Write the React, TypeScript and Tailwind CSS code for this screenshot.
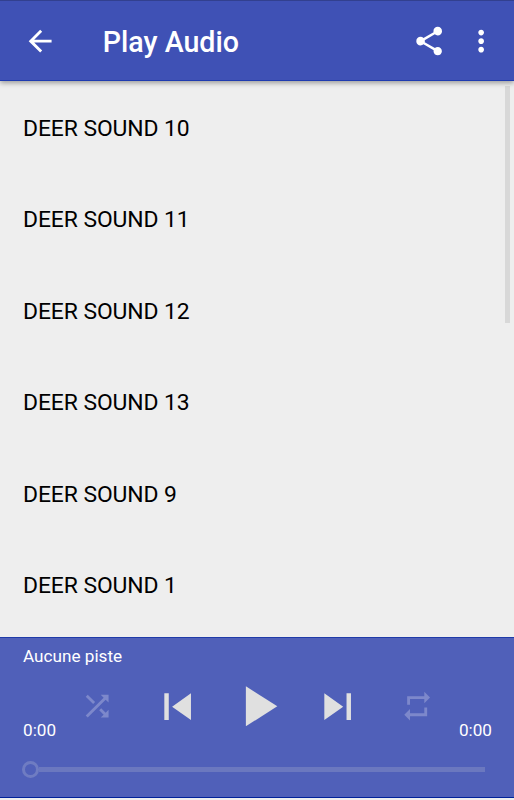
import React from "react";

const tracks = [
  { id: 10, name: "DEER SOUND 10" },
  { id: 11, name: "DEER SOUND 11" },
  { id: 12, name: "DEER SOUND 12" },
  { id: 13, name: "DEER SOUND 13" },
  { id: 9, name: "DEER SOUND 9" },
  { id: 1, name: "DEER SOUND 1" },
];

const icons = {
  back: "M20 11H7.83l5.59-5.59L12 4l-8 8 8 8 1.41-1.41L7.83 13H20v-2z",
  share:
    "M18 16.08c-.76 0-1.44.3-1.96.77L8.91 12.7c.05-.23.09-.46.09-.7s-.04-.47-.09-.7l7.05-4.11c.54.5 1.25.81 2.04.81 1.66 0 3-1.34 3-3s-1.34-3-3-3-3 1.34-3 3c0 .24.04.47.09.7L8.04 9.81C7.5 9.31 6.79 9 6 9c-1.66 0-3 1.34-3 3s1.34 3 3 3c.79 0 1.5-.31 2.04-.81l7.12 4.16c-.05.21-.08.43-.08.65 0 1.61 1.31 2.92 2.92 2.92s2.92-1.31 2.92-2.92-1.31-2.92-2.92-2.92z",
  more: "M12 8c1.1 0 2-.9 2-2s-.9-2-2-2-2 .9-2 2 .9 2 2 2zm0 2c-1.1 0-2 .9-2 2s.9 2 2 2 2-.9 2-2-.9-2-2-2zm0 6c-1.1 0-2 .9-2 2s.9 2 2 2 2-.9 2-2-.9-2-2-2z",
  shuffle:
    "M10.59 9.17L5.41 4 4 5.41l5.17 5.17 1.42-1.41zM14.5 4l2.04 2.04L4 18.59 5.41 20 17.96 7.46 20 9.5V4h-5.5zm.33 9.41l-1.41 1.41 3.13 3.13L14.5 20H20v-5.5l-2.04 2.04-3.13-3.13z",
  previous: "M6 6h2v12H6zm3.5 6l8.5 6V6z",
  play: "M8 5v14l11-7z",
  next: "M6 18l8.5-6L6 6v12zM16 6v12h2V6h-2z",
  repeat:
    "M17 17H7v-3l-4 4 4 4v-3h12v-6h-2v4zM7 7h10v3l4-4-4-4v3H5v6h2V7z",
};

const Icon = ({ path, className }: { path: string; className: string }) => (
  <svg viewBox="0 0 24 24" fill="currentColor" className={`shrink-0 ${className}`}>
    <path d={path} />
  </svg>
);

const controls = [
  { label: "Shuffle", path: icons.shuffle, className: "size-[34.3px] text-[#7d88cb]" },
  { label: "Previous", path: icons.previous, className: "size-[53.3px] text-[#e0e0e0]" },
  { label: "Play", path: icons.play, className: "size-[68.6px] text-[#e0e0e0]" },
  { label: "Next", path: icons.next, className: "size-[53.3px] text-[#e0e0e0]" },
  { label: "Repeat", path: icons.repeat, className: "size-[34.3px] text-[#7d88cb]" },
];

const App = () => {
  return (
    <div className="flex h-[800px] w-[514px] flex-col overflow-hidden bg-[#eeeeee] font-[Roboto,sans-serif]">
      {/* ===== App bar ===== */}
      <header className="relative z-10 flex h-[81px] shrink-0 items-center border-t border-b border-t-[#32408f] border-b-[#1f3bb0] bg-[#3f51b5] pt-px pr-4 pl-[23px] text-white shadow-[0_2px_5px_rgba(0,0,0,0.35)]">
        <button aria-label="Back">
          <Icon path={icons.back} className="size-[34.3px]" />
        </button>
        <h1 className="ml-[45.5px] flex-1 pt-[2px] text-[28.6px] leading-none font-medium">
          Play Audio
        </h1>
        <button aria-label="Share" className="mr-[17px]">
          <Icon path={icons.share} className="size-[34.3px]" />
        </button>
        <button aria-label="More">
          <Icon path={icons.more} className="size-[34.3px]" />
        </button>
      </header>

      {/* ===== Track list ===== */}
      <main className="relative min-h-0 flex-1 overflow-hidden">
        <ul>
          {tracks.map((track) => (
            <li
              key={track.id}
              className="flex h-[91.6px] items-center pt-[3.8px] pl-[23px] text-[22.9px] tracking-[-0.09px] text-black"
            >
              {track.name}
            </li>
          ))}
        </ul>
        <div className="absolute top-[5px] right-1 h-[237px] w-[5px] bg-[#d8d8d8]" />
      </main>

      {/* ===== Player ===== */}
      <footer className="mb-[2px] flex h-[161px] shrink-0 flex-col border-t border-b border-t-[#1f3ba8] border-b-[#002299] bg-[#5060b9] text-white">
        <p className="h-[34px] pt-2 pl-[23px] text-[17.15px] leading-[20px]">
          Aucune piste
        </p>
        <div className="-mt-px grid h-[70px] grid-cols-[repeat(5,80px)] items-center justify-center pt-px pl-px">
          {controls.map((control) => (
            <button
              key={control.label}
              aria-label={control.label}
              className="flex items-center justify-center"
            >
              <Icon path={control.path} className={control.className} />
            </button>
          ))}
        </div>
        <div className="-mt-[21px] flex justify-between pr-[22px] pl-[23px] text-[17.15px] leading-[20px]">
          <span>0:00</span>
          <span>0:00</span>
        </div>
        <div className="mt-[21px] flex items-center pr-[29px] pl-[21.5px]">
          <div className="size-[17px] rounded-full border-[3px] border-[#6f7cc2]" />
          <div className="h-[5px] flex-1 bg-[#6b78bf]" />
        </div>
      </footer>
    </div>
  );
};

export default App;
